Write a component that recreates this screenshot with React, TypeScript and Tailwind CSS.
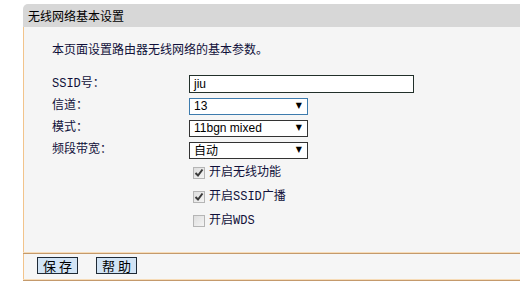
import React from 'react';

const labelFont = { fontFamily: '"Liberation Mono", "Noto Sans CJK SC", monospace' };

const FakeSelect: React.FC<{ value: string; focused?: boolean; cjk?: boolean }> = ({ value, focused, cjk }) => (
  <div
    className={`flex items-center justify-between h-[17px] w-[119px] bg-white pl-[4px] pr-[5px] border ${
      focused ? 'border-[#3d7bad]' : 'border-[#333333]'
    }`}
  >
    <span
      className="text-[12px] leading-none text-black"
      style={{ fontFamily: cjk ? '"Noto Sans CJK SC", sans-serif' : '"Liberation Sans", Arial, sans-serif' }}
    >
      {value}
    </span>
    <span className="text-[8px] leading-none text-black" style={{ fontFamily: '"DejaVu Sans", sans-serif' }}>▼</span>
  </div>
);

const Check: React.FC<{ checked: boolean; label: string }> = ({ checked, label }) => (
  <div className="flex items-center h-[24px] pl-[4px]">
    <div className="w-[12px] h-[12px] border border-[#b5b5b5] bg-gradient-to-br from-[#dedede] to-[#f4f4f4] flex items-center justify-center">
      {checked && (
        <svg width="10" height="10" viewBox="0 0 10 10">
          <path d="M1.5 5 L4 7.5 L8.5 1.5" fill="none" stroke="#3a3a3a" strokeWidth="2" />
        </svg>
      )}
    </div>
    <span className="ml-[4px] text-[12px] text-[#10103a]" style={labelFont}>
      {label}
    </span>
  </div>
);

const Row: React.FC<{ label: string; children: React.ReactNode }> = ({ label, children }) => (
  <div className="flex items-center h-[22px]">
    <div className="w-[137px] text-[12px] text-[#10103a]" style={labelFont}>
      {label}
    </div>
    {children}
  </div>
);

const App: React.FC = () => {
  return (
    <div className="w-[520px] h-[283px] bg-white overflow-hidden pl-[23px] pt-[4px]">
      <div className="w-[520px]">
        {/* header bar */}
        <div
          className="h-[23px] bg-[#d7d7d7] rounded-tl-[5px] flex items-center pl-[5px] text-[12px] text-black"
          style={{ fontFamily: '"Noto Sans CJK SC", sans-serif' }}
        >
          无线网络基本设置
        </div>

        {/* body */}
        <div className="border-l border-[#f2c48c] bg-[#f5f5f5] pt-[14px] pl-[28px] h-[225px]">
          <div className="h-[16px] text-[12px] leading-[16px] text-[#10103a]" style={{ fontFamily: '"Noto Sans CJK SC", sans-serif' }}>
            本页面设置路由器无线网络的基本参数。
          </div>
          <div className="mt-[16px]">
            <Row label="SSID号：">
              <div className="h-[18px] w-[225px] bg-white border border-[#22302a] flex items-center pl-[4px]">
                <span className="text-[12px] text-black" style={{ fontFamily: '"Liberation Sans", Arial, sans-serif' }}>
                  jiu
                </span>
              </div>
            </Row>
            <Row label="信道：">
              <FakeSelect value="13" focused />
            </Row>
            <Row label="模式：">
              <FakeSelect value="11bgn mixed" />
            </Row>
            <Row label="频段带宽：">
              <FakeSelect value="自动" cjk />
            </Row>
            <div className="pl-[137px]">
              <Check checked label="开启无线功能" />
              <Check checked label="开启SSID广播" />
              <Check checked={false} label="开启WDS" />
            </div>
          </div>
        </div>

        {/* separator */}
        <div className="h-px bg-[#f7dcb8]" />
        <div className="h-px bg-[#c49a6c]" />

        {/* button row */}
        <div className="border-l border-[#f2c48c] bg-[#f6f6f6] h-[25px] pl-[13px] pt-[3px] flex gap-[18px]">
          {['保 存', '帮 助'].map((t) => (
            <button
              key={t}
              className="h-[17px] w-[41px] bg-[#d2e4f5] border border-[#1f2a36] text-[13px] leading-none text-black flex items-center justify-center"
              style={{ fontFamily: '"Noto Sans CJK SC", sans-serif' }}
            >
              {t}
            </button>
          ))}
        </div>
        <div className="h-px bg-[#f7dcb8]" />
        <div className="h-px bg-[#c49a6c]" />
      </div>
    </div>
  );
};

export default App;
